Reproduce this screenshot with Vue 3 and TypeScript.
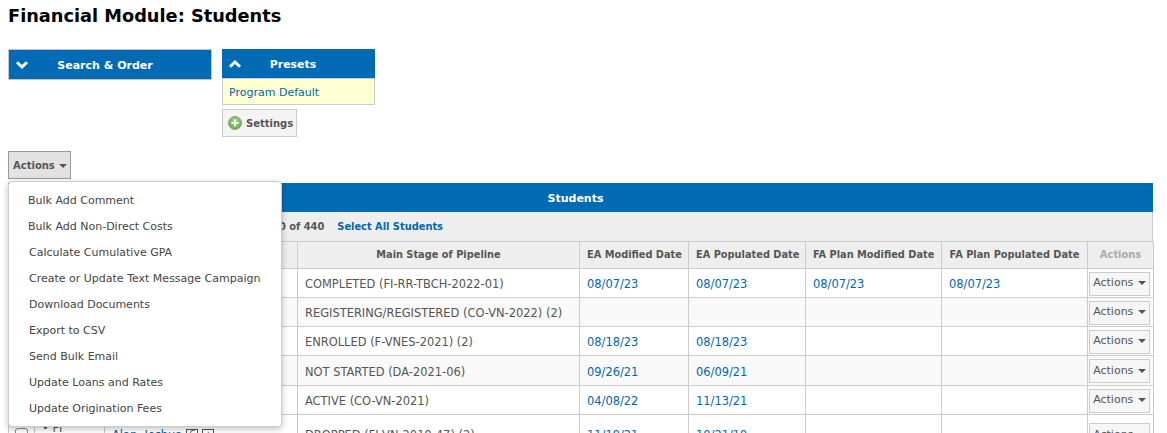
<script setup lang="ts">
interface Row {
  stage: string
  ea1: string
  ea2: string
  fa1: string
  fa2: string
}
const rows: Row[] = [
  { stage: 'COMPLETED (FI-RR-TBCH-2022-01)', ea1: '08/07/23', ea2: '08/07/23', fa1: '08/07/23', fa2: '08/07/23' },
  { stage: 'REGISTERING/REGISTERED (CO-VN-2022) (2)', ea1: '', ea2: '', fa1: '', fa2: '' },
  { stage: 'ENROLLED (F-VNES-2021) (2)', ea1: '08/18/23', ea2: '08/18/23', fa1: '', fa2: '' },
  { stage: 'NOT STARTED (DA-2021-06)', ea1: '09/26/21', ea2: '06/09/21', fa1: '', fa2: '' },
  { stage: 'ACTIVE (CO-VN-2021)', ea1: '04/08/22', ea2: '11/13/21', fa1: '', fa2: '' }
]
const menu: string[] = [
  'Bulk Add Comment',
  'Bulk Add Non-Direct Costs',
  'Calculate Cumulative GPA',
  'Create or Update Text Message Campaign',
  'Download Documents',
  'Export to CSV',
  'Send Bulk Email',
  'Update Loans and Rates',
  'Update Origination Fees'
]
</script>

<template>
  <div class="page">
    <h1 class="title">Financial Module: Students</h1>

    <div class="panels">
      <div class="panel search">
        <svg class="chev" width="12" height="8" viewBox="0 0 12 8"><path d="M0 2.2 L2 0.2 L6 4 L10 0.2 L12 2.2 L6 8 Z" fill="#fff" /></svg>
        <span class="panel-title">Search &amp; Order</span>
      </div>
      <div class="presets">
        <div class="panel preset-head">
          <svg class="chev" width="12" height="8" viewBox="0 0 12 8"><path d="M0 5.8 L2 7.8 L6 4 L10 7.8 L12 5.8 L6 0 Z" fill="#fff" /></svg>
          <span class="panel-title">Presets</span>
        </div>
        <div class="preset-body"><a class="link">Program Default</a></div>
        <button class="settings">
          <svg width="14" height="14" viewBox="0 0 14 14">
            <defs>
              <radialGradient id="gr" cx="50%" cy="35%" r="65%">
                <stop offset="0%" stop-color="#a6d68f" />
                <stop offset="100%" stop-color="#64a84f" />
              </radialGradient>
            </defs>
            <circle cx="7" cy="7" r="6.5" fill="url(#gr)" stroke="#7aa86c" />
            <path d="M7 3.5 V10.5 M3.5 7 H10.5" stroke="#fff" stroke-width="2.2" />
          </svg>
          Settings
        </button>
      </div>
    </div>

    <button class="actions-main">Actions <span class="caret"></span></button>

    <div class="grid-wrap">
      <div class="grid-title">Students</div>
      <div class="toolbar">
        <span class="count">0 of 440</span>
        <a class="select-all">Select All Students</a>
      </div>
      <table class="grid">
        <colgroup>
          <col class="c1" /><col class="c2" /><col class="c3" /><col class="c4" />
          <col class="c5" /><col class="c6" /><col class="c7" /><col class="c8" /><col class="c9" />
        </colgroup>
        <thead>
          <tr>
            <th></th>
            <th></th>
            <th></th>
            <th>Main Stage of Pipeline</th>
            <th>EA Modified Date</th>
            <th>EA Populated Date</th>
            <th>FA Plan Modified Date</th>
            <th>FA Plan Populated Date</th>
            <th class="muted">Actions</th>
          </tr>
        </thead>
        <tbody>
          <tr v-for="(r, i) in rows" :key="i" :class="{ alt: i % 2 === 1, tall: i === 3 }">
            <td></td>
            <td></td>
            <td></td>
            <td>{{ r.stage }}</td>
            <td><a class="link">{{ r.ea1 }}</a></td>
            <td><a class="link">{{ r.ea2 }}</a></td>
            <td><a class="link">{{ r.fa1 }}</a></td>
            <td><a class="link">{{ r.fa2 }}</a></td>
            <td class="act"><button class="row-btn">Actions <span class="caret"></span></button></td>
          </tr>
          <tr class="last">
            <td class="chk"><span class="box"></span></td>
            <td class="flag">• FI</td>
            <td class="name"><a class="link">Alan, Joshua</a><span class="mini">C</span><span class="mini">★</span></td>
            <td>DROPPED (FI-VN-2019-47) (2)</td>
            <td><a class="link">11/19/21</a></td>
            <td><a class="link">10/21/19</a></td>
            <td></td>
            <td></td>
            <td class="act"><button class="row-btn">Actions <span class="caret"></span></button></td>
          </tr>
        </tbody>
      </table>
    </div>

    <ul class="menu">
      <li v-for="(m, i) in menu" :key="m" :class="{ nudge: i < 2 }">{{ m }}</li>
    </ul>
  </div>
</template>

<style scoped>
.page {
  position: relative;
  width: 1167px;
  height: 433px;
  overflow: hidden;
  box-sizing: border-box;
  padding: 0 14px 0 8px;
  font-family: "DejaVu Sans", Verdana, sans-serif;
  font-size: 11px;
  color: #555;
  background: #fff;
}
.title {
  margin: 0;
  padding-top: 5px;
  height: 49px;
  box-sizing: border-box;
  font-size: 17.76px;
  line-height: 22px;
  font-weight: 700;
  color: #000;
}
.panels {
  display: flex;
  gap: 10px;
  align-items: flex-start;
  height: 102px;
}
.panel {
  display: flex;
  align-items: center;
  background: #006bb5;
  color: #fff;
  font-weight: 700;
  box-sizing: border-box;
}
.panel-title {
  padding-top: 2px;
}
.search {
  width: 204px;
  height: 31px;
  border: 1px solid #c4c4c4;
  padding-left: 7px;
}
.search .panel-title {
  flex: 1;
  text-align: center;
  padding-right: 29px;
}
.presets {
  width: 153px;
}
.preset-head {
  height: 29px;
  padding-left: 7px;
}
.preset-head .panel-title {
  flex: 1;
  text-align: center;
  padding-right: 30px;
  font-size: 10.9px;
}
.preset-body {
  height: 27px;
  box-sizing: border-box;
  background: #ffffd2;
  border: 1px solid #ccc;
  padding: 2px 6px 0;
  display: flex;
  align-items: center;
}
.settings {
  display: flex;
  align-items: center;
  gap: 4px;
  margin-top: 4px;
  width: 75px;
  height: 28px;
  padding: 0 0 0 5px;
  background: #f4f4f4;
  border: 1px solid #ccc;
  font: 700 10px "DejaVu Sans", Verdana, sans-serif;
  color: #555;
}
.actions-main {
  display: block;
  width: 63px;
  height: 28px;
  padding: 0 0 0 4px;
  text-align: left;
  background: #e2e2e2;
  border: 1px solid #999;
  font: 700 10px "DejaVu Sans", Verdana, sans-serif;
  color: #555;
}
.caret {
  display: inline-block;
  vertical-align: middle;
  width: 0;
  height: 0;
  margin-left: 1px;
  border-left: 4px solid transparent;
  border-right: 4px solid transparent;
  border-top: 4px solid #555;
}
.grid-wrap {
  margin-top: 4px;
  width: 1145px;
}
.grid-title {
  height: 29px;
  line-height: 31px;
  padding-right: 10px;
  background: #006bb5;
  color: #fff;
  font-weight: 700;
  text-align: center;
}
.toolbar {
  display: flex;
  align-items: center;
  gap: 13px;
  height: 29px;
  box-sizing: border-box;
  padding-left: 271px;
  background: #eee;
  border-right: 1px solid #ccc;
  font-weight: 700;
  font-size: 9.85px;
}
.select-all {
  color: #0066b3;
}
.link {
  color: #0066b3;
}
.grid {
  width: 1145px;
  border-collapse: collapse;
  table-layout: fixed;
}
.c1 { width: 26px; }
.c2 { width: 70px; }
.c3 { width: 193px; }
.c4 { width: 282px; }
.c5 { width: 109px; }
.c6 { width: 117px; }
.c7 { width: 136px; }
.c8 { width: 146px; }
.c9 { width: 66px; }
th {
  height: 27px;
  padding: 0 7px 2px;
  box-sizing: border-box;
  background: #eee;
  border: 1px solid #ccc;
  font-size: 9.8px;
  font-weight: 700;
  text-align: center;
  white-space: nowrap;
  color: #555;
}
.muted {
  color: #aaa;
}
td {
  height: 29px;
  padding: 2px 7px 0;
  box-sizing: border-box;
  border: 1px solid #ccc;
  font-size: 11.45px;
  white-space: nowrap;
  background: #fff;
}
.alt td {
  background: #f9f9f9;
}
.tall td {
  height: 30px;
}
td.act {
  padding: 1px 2px 0 0;
  text-align: center;
}
.row-btn {
  display: block;
  width: 61px;
  height: 24px;
  margin: 0 auto;
  padding: 0 0 2px;
  background: #f6f6f6;
  border: 1px solid #ccc;
  font: 11px "DejaVu Sans", Verdana, sans-serif;
  color: #555;
}
.last td {
  height: 38px;
}
.last td.flag {
  vertical-align: top;
  padding-top: 6px;
}
.last td.chk {
  vertical-align: top;
  padding: 13px 0 0 6px;
}
.last td.act {
  vertical-align: top;
  padding-top: 8px;
}
.box {
  display: block;
  width: 13px;
  height: 13px;
  border: 1px solid #888;
  border-radius: 3px;
  box-sizing: border-box;
}
.mini {
  display: inline-block;
  vertical-align: middle;
  width: 12px;
  height: 12px;
  line-height: 10px;
  margin-left: 4px;
  border: 1px solid #555;
  font-size: 8px;
  text-align: center;
  box-sizing: border-box;
  color: #555;
}
.menu {
  position: absolute;
  left: 8px;
  top: 181px;
  width: 274px;
  height: 246px;
  margin: 0;
  padding: 7px 0 0;
  box-sizing: border-box;
  list-style: none;
  background: #fff;
  border: 1px solid #ccc;
  border-radius: 4px;
  box-shadow: 0 2px 6px rgba(0, 0, 0, 0.25);
}
.menu li {
  height: 26px;
  line-height: 24px;
  padding-left: 20px;
  white-space: nowrap;
  color: #444;
}
.menu li.nudge {
  padding-left: 19px;
}
</style>

<style>
html,
body {
  margin: 0;
  overflow: hidden;
}
</style>
